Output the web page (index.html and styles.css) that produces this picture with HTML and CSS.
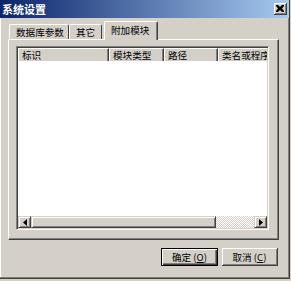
FILE: index.html
```html
<!DOCTYPE html>
<html>
<head>
<meta charset="utf-8">
<link rel="stylesheet" href="styles.css">
</head>
<body>
<div class="window">
  <div class="titlebar">
    <span class="title">系统设置</span>
    <span class="close"><svg width="8" height="7" viewBox="0 0 8 7"><path d="M0 0h2l2 2 2-2h2v1l-2 2.5 2 2.5v1h-2l-2-2-2 2h-2v-1l2-2.5-2-2.5z" fill="#000"/></svg></span>
  </div>
  <div class="content">
    <div class="tabs">
      <div class="tab first">数据库参数</div>
      <div class="tab">其它</div>
      <div class="tab active">附加模块</div>
    </div>
    <div class="panel">
      <div class="list">
        <div class="header">
          <div class="col c1">标识</div>
          <div class="col c2">模块类型</div>
          <div class="col c3">路径</div>
          <div class="col c4">类名或程序名</div>
        </div>
        <div class="rows"></div>
        <div class="hscroll">
          <div class="sbtn"><svg width="4" height="7" viewBox="0 0 4 7"><path d="M4 0v7L0 3.5z" fill="#000"/></svg></div>
          <div class="thumb"></div>
          <div class="track"></div>
          <div class="sbtn"><svg width="4" height="7" viewBox="0 0 4 7"><path d="M0 0v7l4-3.5z" fill="#000"/></svg></div>
        </div>
      </div>
    </div>
    <div class="buttons">
      <div class="btn">确定 (<u>O</u>)</div>
      <div class="btn">取消 (<u>C</u>)</div>
    </div>
  </div>
</div>
</body>
</html>
```
FILE: styles.css
```css
html, body {
  margin: 0;
  padding: 0;
  background: #d4d0c8;
}
body {
  width: 291px;
  height: 281px;
  overflow: hidden;
  font-family: "Noto Sans CJK SC", "Liberation Sans", sans-serif;
  font-size: 9.6px;
  color: #000;
}
.window {
  width: 290px;
  height: 279px;
  box-sizing: border-box;
  background: #d4d0c8;
  border-right: 1px solid #404040;
  border-bottom: 1px solid #404040;
  box-shadow: inset -1px -1px #808080, inset 1px 0 #fff;
  display: flex;
  flex-direction: column;
}
.titlebar {
  height: 18px;
  flex: none;
  background: linear-gradient(to right, #0a246a, #a6caf0);
  display: flex;
  align-items: center;
  justify-content: space-between;
  padding: 0 2px 0 2px;
}
.title {
  color: #fff;
  font-weight: bold;
  font-size: 11px;
  line-height: 12px;
}
.close {
  width: 12px;
  height: 11px;
  background: #d4d0c8;
  border-right: 1px solid #404040;
  border-bottom: 1px solid #404040;
  box-shadow: inset 1px 1px #fff, inset -1px -1px #808080;
  display: flex;
  align-items: center;
  justify-content: center;
}
.content {
  flex: 1;
  display: flex;
  flex-direction: column;
  padding: 4px 10px 0 8px;
}
.tabs {
  display: flex;
  align-items: flex-end;
  height: 18px;
  margin-bottom: -1px;
  padding-left: 1px;
}
.tab {
  height: 16px;
  box-sizing: border-box;
  padding: 0 6px 0 6px;
  line-height: 15px;
  border-top: 1px solid #fff;
  border-left: 1px solid #fff;
  border-right: 1px solid #404040;
  border-radius: 2px 2px 0 0;
  white-space: nowrap;
}
.tab.first {
  width: 60px;
}
.tab:nth-child(2) {
  width: 33px;
}
.tab.active {
  height: 19px;
  margin-left: 2px;
  padding: 0 8px 0 6px;
  line-height: 17px;
  background: #d4d0c8;
  position: relative;
  z-index: 1;
  box-shadow: inset -1px 0 #808080;
}
.panel {
  width: 271px;
  height: 201px;
  box-sizing: border-box;
  border-top: 1px solid #fff;
  border-left: 1px solid #fff;
  border-right: 1px solid #404040;
  border-bottom: 1px solid #404040;
  box-shadow: inset -1px -1px #808080;
  padding: 6px 9px 9px 7px;
  display: flex;
}
.list {
  flex: 1;
  display: flex;
  flex-direction: column;
  border-top: 1px solid #808080;
  border-left: 1px solid #808080;
  border-right: 1px solid #fff;
  border-bottom: 1px solid #fff;
  box-shadow: inset 1px 1px #404040, inset -1px -1px #d4d0c8;
  padding: 1px;
  overflow: hidden;
}
.header {
  height: 13px;
  display: flex;
  flex: none;
  overflow: hidden;
}
.col {
  box-sizing: border-box;
  height: 13px;
  line-height: 12px;
  padding-left: 3px;
  background: #d4d0c8;
  border-top: 1px solid #fff;
  border-left: 1px solid #fff;
  border-right: 1px solid #404040;
  box-shadow: inset -1px 0 #808080;
  white-space: nowrap;
  overflow: hidden;
  flex: none;
}
.c1 { width: 91px; }
.c2 { width: 55px; }
.c3 { width: 54px; }
.c4 { flex: 1; width: auto; border-right: none; box-shadow: none; text-overflow: clip; }
.rows {
  flex: 1;
  background: #fff;
}
.hscroll {
  height: 12px;
  display: flex;
  flex: none;
}
.sbtn {
  width: 13px;
  height: 12px;
  box-sizing: border-box;
  background: #d4d0c8;
  border-top: 1px solid #d4d0c8;
  border-left: 1px solid #d4d0c8;
  border-right: 1px solid #404040;
  border-bottom: 1px solid #404040;
  box-shadow: inset 1px 1px #fff, inset -1px -1px #808080;
  display: flex;
  align-items: center;
  justify-content: center;
  flex: none;
}
.thumb {
  width: 185px;
  box-sizing: border-box;
  background: #d4d0c8;
  border-top: 1px solid #d4d0c8;
  border-left: 1px solid #d4d0c8;
  border-right: 1px solid #404040;
  border-bottom: 1px solid #404040;
  box-shadow: inset 1px 1px #fff, inset -1px -1px #808080;
  flex: none;
}
.track {
  flex: 1;
  background: repeating-conic-gradient(#d4d0c8 0 25%, #fff 0 50%) 0 0 / 2px 2px;
}
.buttons {
  display: flex;
  justify-content: flex-end;
  gap: 4px;
  margin-top: 8px;
  padding-right: 1px;
}
.btn {
  width: 57px;
  height: 18px;
  box-sizing: border-box;
  border: 1px solid #000;
  box-shadow: inset 1px 1px #fff, inset -1px -1px #404040, inset -2px -2px #808080;
  background: #d4d0c8;
  display: flex;
  align-items: center;
  justify-content: center;
  line-height: 12px;
  white-space: nowrap;
}
.btn + .btn {
  width: 56px;
  border: none;
  border-right: 1px solid #404040;
  border-bottom: 1px solid #404040;
  box-shadow: inset 1px 1px #fff, inset -1px -1px #808080;
}
u {
  text-decoration: underline;
}
```
